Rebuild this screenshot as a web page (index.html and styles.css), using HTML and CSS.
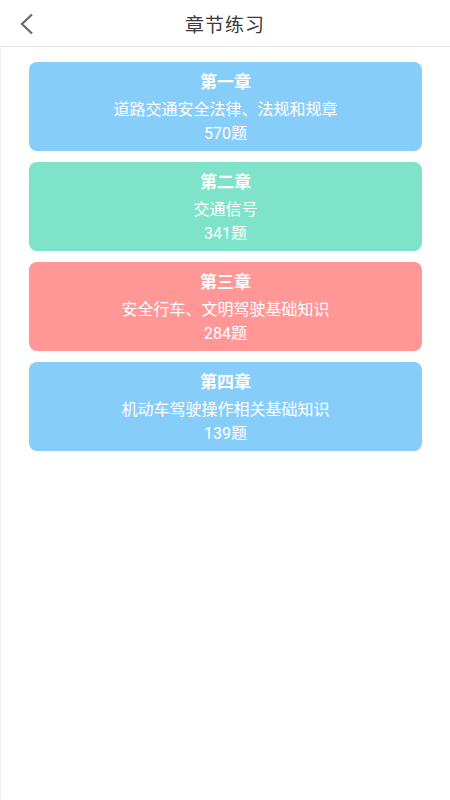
FILE: index.html
```html
<!DOCTYPE html>
<html lang="zh-CN">
<head>
  <meta charset="UTF-8">
  <title>章节练习</title>
  <link rel="stylesheet" href="styles.css">
</head>
<body>
  <header class="header">
    <button class="back-btn" title="返回">
      <svg width="16" height="22" viewBox="0 0 16 22"><polyline points="13,1.5 3,11 13,20.5" fill="none" stroke="#6b6b6b" stroke-width="2.2"/></svg>
    </button>
    <div class="title">章节练习</div>
  </header>
  <div class="main">
    <div class="chapter blue">
      <div class="chapter-name">第一章</div>
      <div class="chapter-desc">道路交通安全法律、法规和规章</div>
      <div class="chapter-count">570题</div>
    </div>
    <div class="chapter green">
      <div class="chapter-name">第二章</div>
      <div class="chapter-desc">交通信号</div>
      <div class="chapter-count">341题</div>
    </div>
    <div class="chapter red">
      <div class="chapter-name">第三章</div>
      <div class="chapter-desc">安全行车、文明驾驶基础知识</div>
      <div class="chapter-count">284题</div>
    </div>
    <div class="chapter blue">
      <div class="chapter-name">第四章</div>
      <div class="chapter-desc">机动车驾驶操作相关基础知识</div>
      <div class="chapter-count">139题</div>
    </div>
  </div>
</body>
</html>
```

FILE: styles.css
```css
body { margin: 0; padding: 0; background: #fff; font-family: Roboto, "Noto Sans CJK SC", sans-serif; }
.header { height: 46px; border-bottom: 1px solid #e6e6e6; display: flex; align-items: center; justify-content: center; position: relative; }
.header .back-btn { position: absolute; left: 17px; top: 12px; background: none; border: none; padding: 0; width: 20px; height: 24px; display: flex; align-items: center; justify-content: center; cursor: pointer; }
.header .title { font-size: 19px; color: #3a3a3a; letter-spacing: 1px; }
.main { border-left: 1px solid #eee; min-height: calc(100vh - 47px); box-sizing: border-box; padding: 15px 28px 0 28px; display: flex; flex-direction: column; gap: 11px; }
.chapter { height: 89px; border-radius: 8px; color: #fff; display: flex; flex-direction: column; align-items: center; box-sizing: border-box; padding-top: 9px; }
.chapter.blue { background: #87cdfa; }
.chapter.green { background: #7fe3ca; }
.chapter.red { background: #ff9797; }
.chapter-name { font-size: 17px; font-weight: bold; line-height: 22px; }
.chapter-desc { font-size: 16px; line-height: 22px; margin-top: 6px; }
.chapter-count { font-size: 16px; line-height: 22px; margin-top: 2px; }
```
